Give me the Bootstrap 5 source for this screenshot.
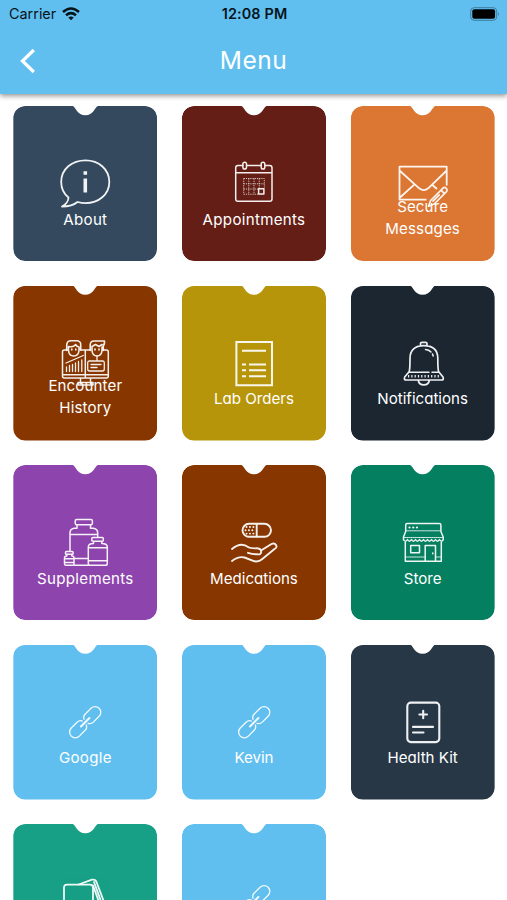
<!DOCTYPE html>
<html lang="en">
<head>
<meta charset="utf-8">
<meta name="viewport" content="width=device-width, initial-scale=1">
<title>Menu</title>
<link href="https://cdn.jsdelivr.net/npm/bootstrap@5.3.0/dist/css/bootstrap.min.css" rel="stylesheet">
<style>
  body { font-family: Inter, "Liberation Sans", sans-serif; background: #fff; }
  .screen { height: 100vh; }
  .app-header { background: #61bff0; height: 94px; box-shadow: 0 2px 5px rgba(0,0,0,.42); flex: none; z-index: 2; }
  .status-bar { height: 27px; padding: 0 7px 0 9px; color: #07131a; font-size: 14.4px; line-height: 27px; }
  .status-bar > div { flex: 1 1 0; }
  .status-bar .clock { flex: none; font-size: 14.4px; font-weight: 600; letter-spacing: .15px; }
  .wifi { margin-left: 6px; }
  .title-bar { height: 66px; padding: 1px 20px 0; }
  .title-bar h1 { font-size: 24.5px; font-weight: 400; letter-spacing: .5px; }
  .side { width: 20px; }
  .tiles { padding: 12px 0 0 1px; row-gap: 24.5px; }
  .tile {
    width: 144px; height: 155px; padding-top: 49px; border-radius: 12px; color: #fff;
    clip-path: path("M0 12A12 12 0 0 1 12 0H59.500C62.500 1.500 64 9.300 72 9.300C80 9.300 81.500 1.500 84.500 0H132A12 12 0 0 1 144 12V143A12 12 0 0 1 132 155H12A12 12 0 0 1 0 143Z");
  }
  .tile svg { width: 56px; height: 56px; flex: none; fill: none; stroke: #fff; stroke-width: 1.5; stroke-linecap: round; stroke-linejoin: round; opacity: .93; }
  .tile span { font-size: 15.1px; line-height: 22px; margin-top: -2.5px; text-align: center; font-feature-settings: "cv11"; white-space: nowrap; }
  .tile span.two-line { margin-top: -15.5px; letter-spacing: .12px; }
  .tile span.wide { letter-spacing: .3px; }
  .c-navy { background: #34495e; } .c-maroon { background: #641e16; } .c-orange { background: #dc7633; }
  .c-brown { background: #873600; } .c-gold { background: #b7950b; } .c-ink { background: #1b2631; }
  .c-purple { background: #8e44ad; } .c-green { background: #047f5f; } .c-sky { background: #61bff0; }
  .c-slate { background: #273746; } .c-teal { background: #17a085; }
</style>
</head>
<body>
<svg class="d-none" xmlns="http://www.w3.org/2000/svg">
  <symbol id="chain" viewBox="0 0 56 56">
    <g transform="translate(28.2 28.2) rotate(-45)" stroke-width="1.300">
      <path d="M1.200 -2.800C2 -4.600 3.800 -5.700 5.800 -5.700H14a5.700 5.700 0 0 1 0 11.400H5.800C3.800 5.700 2 4.600 1.200 2.800M-1.200 -2.800C-2 -4.600 -3.800 -5.700 -5.800 -5.700H-14a5.700 5.700 0 0 0 0 11.400H-5.800C-3.800 5.700 -2 4.600 -1.200 2.800"/>
      <path stroke-width="2" d="M-6 0H6"/>
    </g>
  </symbol>
</svg>
<div class="screen d-flex flex-column overflow-hidden">
  <header class="app-header position-relative">
    <div class="status-bar d-flex align-items-center">
      <div class="d-flex align-items-center">Carrier
        <svg class="wifi" width="18" height="14" viewBox="0 0 18 14" fill="none" stroke="#07131a" stroke-width="2.500"><path d="M1 5Q9 -2 17 5M4 8.200Q9 4 14 8.200"/><path d="M6.300 10.500Q9 8.300 11.700 10.500L9 13.300Z" fill="#07131a" stroke="none"/></svg>
      </div>
      <div class="clock">12:08 PM</div>
      <div class="d-flex justify-content-end">
        <svg width="30" height="14" viewBox="0 0 30 14"><rect x=".7" y=".7" width="26" height="12.600" rx="3.500" fill="none" stroke="#3d7c9e"/><rect x="2.300" y="2.300" width="22.800" height="9.400" rx="2" fill="#000"/><path d="M28.200 4.800Q30 7 28.200 9.200Z" fill="#3d7c9e"/></svg>
      </div>
    </div>
    <div class="title-bar d-flex align-items-center justify-content-between text-white">
      <svg class="side" height="26" viewBox="0 0 20 26" fill="none" stroke="#fff" stroke-width="3.200"><path d="M13.800 2L2.500 13L13.800 24"/></svg>
      <h1 class="m-0">Menu</h1>
      <div class="side"></div>
    </div>
  </header>

  <main class="tiles row row-cols-3 g-0">
    <div class="col d-flex justify-content-center"><div class="tile c-navy d-flex flex-column align-items-center">
      <svg viewBox="0 0 56 56"><path stroke-width="1.800" d="M5 51.500C9 49.500 11.500 45.500 11.500 42.500C6.500 38.500 4.200 33 4.200 27C4.200 14 15 5.300 28.500 5.300S52.300 14.500 52.300 27S41.500 48.200 28.500 48.200C25.500 48.200 23 47.700 20.500 47C17 50 11 51.500 5 51.500Z"/><path stroke-width="3.600" stroke-linecap="butt" d="M28.300 23.500V37.500M28.300 16.300V19.800"/></svg>
      <span class="wide">About</span></div></div>
    <div class="col d-flex justify-content-center"><div class="tile c-maroon d-flex flex-column align-items-center">
      <svg viewBox="0 0 56 56"><path d="M16.800 10.500H12Q9.700 10.500 9.700 12.800V44Q9.700 46.300 12 46.300H43.800Q46 46.300 46 44V12.800Q46 10.500 43.800 10.500H39M20.600 10.500H35M9.700 17.700H46"/><rect x="16.900" y="7.300" width="3.600" height="6.800" rx="1.800"/><rect x="35.200" y="7.300" width="3.600" height="6.800" rx="1.800"/><path stroke-width=".8" stroke-dasharray="1.200 1" stroke-linecap="butt" d="M17.700 23.500H38.300V33M17.700 28.800H38.300M17.700 34H32M17.700 39.200H32M17.700 23.500V39.200M22.800 23.500V39.200M28 23.500V39.200M33.200 23.500V33"/><path d="M32.600 33.800H37.900V39H32.600Z"/></svg>
      <span class="wide">Appointments</span></div></div>
    <div class="col d-flex justify-content-center"><div class="tile c-orange d-flex flex-column align-items-center">
      <svg viewBox="0 0 56 56"><path stroke-width="1.800" stroke-linecap="butt" d="M31.500 44.700H4.500V11.700H51.700V30.500M4.500 15.500L24.200 33.300Q28.800 37 33.200 33.300L51.700 15.500M5 42.500L19.500 29.300M36.500 29.300L42 34"/><path stroke-width="1.700" d="M33.600 51.300L35.600 45.500L47.800 33.300Q49.500 31.600 51.200 33.300T51.300 36.800L39.200 49Z M46 35.100L49.500 38.600M44.300 39.800L38 46.100"/></svg>
      <span class="two-line">Secure<br>Messages</span></div></div>

    <div class="col d-flex justify-content-center"><div class="tile c-brown d-flex flex-column align-items-center">
      <svg viewBox="0 0 56 56"><path d="M10.200 15H7.300Q5.500 15 5.500 17V41Q5.500 43 7.300 43H49.500Q51.300 43 51.300 41V17Q51.300 15 49.500 15H46.500M23.500 15H33M28.300 15V43M5.500 39.700H51.300M23.500 43V48.500M33.500 43V48.500M21 50H36V47.500H21Z"/><path stroke-width="1.600" d="M9.700 15.500V10Q10 5.800 14 5.800H20.500Q24 6.500 23.700 10V15M33.200 15.500V10Q33.300 6 37 6H47.500Q47.800 9.500 46.300 10.500V15.500M11.500 11.500Q17 12.500 18.500 9.500Q20 12 22 12M35 11.500L38.500 9.500L42 11.500L45 9.500M11.500 12V15.500Q12 21 16.700 21T22 15.500V12M35 12V15.500Q35.500 21 40 21T45 15.500V12M14.800 14V15M18.800 14V15M38 14V15M42 14V15"/><path stroke-width="1.300" d="M9 28L16 25L26.300 20.500M9.500 36.500V32M12.500 36.500V30.500M15.500 36.500V29.500M18.500 36.500V28M21.500 36.500V26.500M24.800 36.500V25M32 26H46Q47.300 26 47.300 28V34Q47.300 36 45.500 36H32.500Q30.700 36 30.700 34V28Q30.700 26 32 26M34 29.500H44M34 32.500H40M40 21V25"/></svg>
      <span class="two-line">Encounter<br>History</span></div></div>
    <div class="col d-flex justify-content-center"><div class="tile c-gold d-flex flex-column align-items-center">
      <svg viewBox="0 0 56 56"><g stroke-linecap="butt" stroke-linejoin="miter" stroke-width="2"><path d="M10.400 6.900H46V50.200H10.400Z"/><path d="M16 15.800H40M16 29.500H20M23 29.500H40M16 35.300H20M23 35.300H40M16 41.200H20M23 41.200H40"/></g></svg>
      <span>Lab Orders</span></div></div>
    <div class="col d-flex justify-content-center"><div class="tile c-ink d-flex flex-column align-items-center">
      <svg viewBox="0 0 56 56"><path stroke-width="1.700" d="M25.500 10.500V8.500Q25.500 7.300 27 7.300H30.500Q32 7.300 32 8.500V10.500M14.300 36.500Q15 33 15 23.500C15 15 20 10.700 28.800 10.700S42.800 15 42.800 23.500Q42.800 33 43.500 36.500L48 42Q49.200 45 46.500 45H11.300Q8.500 45 9.700 42ZM23.300 45.500Q24 49.900 28.800 49.900T34.300 45.500"/><path stroke-width="2.600" stroke-dasharray="1.200 2.100" stroke-linecap="butt" d="M13 41.200H45"/><path d="M14 37.300H34M37 37.300H43.500M30.500 14.500Q34 14.800 36 17M37.500 19L38.200 21"/></svg>
      <span>Notifications</span></div></div>

    <div class="col d-flex justify-content-center"><div class="tile c-purple d-flex flex-column align-items-center">
      <svg viewBox="0 0 56 56"><rect x="18.200" y="5.500" width="17.200" height="5.300" rx="1.500"/><path d="M20 11V14.300H17Q13 15 13 19V37M33.500 11V14.300H36.500Q40.700 15 40.700 19V23M13 20.500H40.700M17.200 44.500H31M17.200 51.200H31"/><rect x="34.800" y="23.500" width="11.500" height="3.800" rx="1"/><path d="M36.500 27.500V29.500Q31.300 29.500 31.300 33V49.500Q31.300 51.300 33 51.300H48.500Q50.300 51.300 50.300 49.500V33Q50.300 29.500 44.800 29.500V27.500M31.300 33.800H50.300M31.300 46.800H50.300"/><rect x="8.500" y="37.500" width="7.600" height="2.800" rx=".8"/><path d="M9.800 40.500V42Q7.500 42 7.500 44V49.700Q7.500 51.300 9 51.300H15.500Q17 51.300 17 49.700V44Q17 42 14.800 42V40.500M7.500 44.800H17M7.500 48.500H17"/></svg>
      <span class="wide">Supplements</span></div></div>
    <div class="col d-flex justify-content-center"><div class="tile c-brown d-flex flex-column align-items-center">
      <svg viewBox="0 0 56 56"><g stroke-width="1.900"><rect x="16.500" y="9.800" width="28.500" height="13" rx="6.500"/><path d="M30.700 10V22.500"/><path stroke-width="1.900" stroke-dasharray=".1 3.300" d="M20.500 13H29M19.500 16.300H29M20.500 19.600H29"/><path d="M6 35C12 29.800 17 29 22.500 33.300Q24.500 34.500 31 34.300Q35.300 34.800 35.200 37.800T31.300 40.300Q26.500 40.300 22 38.800M35 36.500L45.500 30Q48.500 28.500 50 31T48.500 35L36 45.300Q33 48 28.500 47.300L18.500 43.500Q12.500 42 6 47"/></g></svg>
      <span>Medications</span></div></div>
    <div class="col d-flex justify-content-center"><div class="tile c-green d-flex flex-column align-items-center">
      <svg viewBox="0 0 56 56"><path d="M8.500 26V23L10.700 17.500V11Q10.700 9.500 12.200 9.500H44.300Q45.900 9.500 45.900 11V17.500L48.200 23V26M8.500 25.500q2 3.500 4 0q2 3.500 4 0q2 3.500 4 0q2 3.500 4 0q2 3.500 4 0q2 3.500 4 0q2 3.500 4 0q2 3.500 4 0q2 3.500 4 0q2 3.500 3.700 0M10.300 28V47.200H46.300V28M15.700 31.500H24.500V38.800H15.700ZM30.200 47V31.500H40.500V47M37.800 39V39.800"/><path stroke-width="2.200" stroke-dasharray=".1 3.600" d="M14.500 13.500H23"/><path stroke-width=".9" stroke-dasharray="1.300 .8" d="M11 16.800H45.500M9.500 23.500H47.500M11 43H30M41 43H46"/></svg>
      <span>Store</span></div></div>

    <div class="col d-flex justify-content-center"><div class="tile c-sky d-flex flex-column align-items-center">
      <svg viewBox="0 0 56 56"><use href="#chain"/></svg>
      <span class="wide">Google</span></div></div>
    <div class="col d-flex justify-content-center"><div class="tile c-sky d-flex flex-column align-items-center">
      <svg viewBox="0 0 56 56"><use href="#chain"/></svg>
      <span>Kevin</span></div></div>
    <div class="col d-flex justify-content-center"><div class="tile c-slate d-flex flex-column align-items-center">
      <svg viewBox="0 0 56 56"><g stroke-width="2.100"><rect x="12.300" y="8.600" width="32" height="39.500" rx="3.500"/><path d="M28.200 16.700V24.300M24.400 20.500H32M18 32.900H38M18 38.500H28.500"/></g></svg>
      <span>Health Kit</span></div></div>

    <div class="col d-flex justify-content-center"><div class="tile c-teal d-flex flex-column align-items-center">
      <svg viewBox="0 0 56 56"><g stroke-width="1.800"><rect x="7" y="11.700" width="29" height="40" rx="3"/><path d="M21.500 11.500L35 6.700Q38 6 39.300 8.500L52 42M36 12.500L46 40M37 9L49 42"/></g></svg>
    </div></div>
    <div class="col d-flex justify-content-center"><div class="tile c-sky d-flex flex-column align-items-center">
      <svg viewBox="0 0 56 56"><use href="#chain"/></svg>
    </div></div>
  </main>
</div>
<script src="https://cdn.jsdelivr.net/npm/bootstrap@5.3.0/dist/js/bootstrap.bundle.min.js"></script>
</body>
</html>
